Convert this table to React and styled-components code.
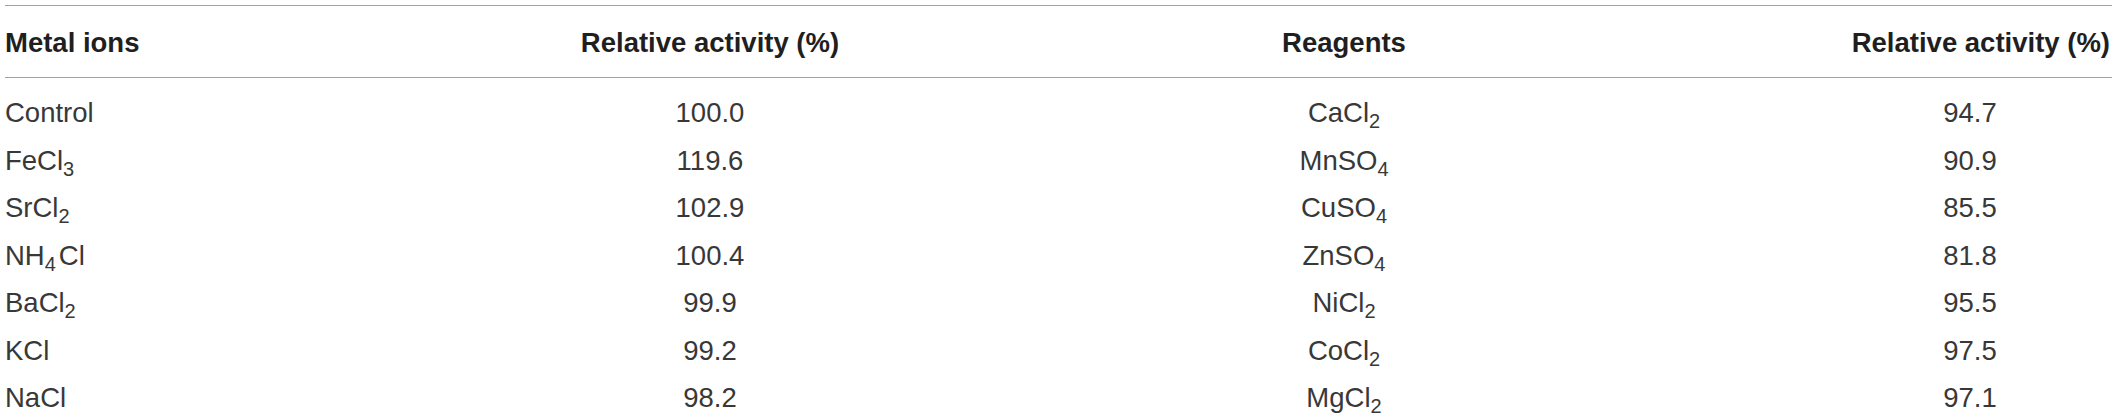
import React from "react";
import styled, { createGlobalStyle } from "styled-components";

const GlobalStyle = createGlobalStyle`
  body {
    margin: 0;
    background: #ffffff;
  }
`;

const TableWrapper = styled("div")`
  margin: 5px 5px 0;
  border-top: 1px solid #a3a3a3;
  font-family: "Liberation Sans", Arial, sans-serif;
  color: #383838;
`;

const Row = styled("div")`
  display: grid;
  grid-template-columns: 555px 300px 968px 284px;
  height: 47.5px;
  line-height: 47.5px;
  font-size: 27.5px;
  white-space: nowrap;
`;

const HeadRow = styled(Row)`
  box-sizing: content-box;
  padding: 13px 0 10px;
  border-bottom: 1px solid #a3a3a3;
  font-weight: 700;
  color: #1f1f1f;
`;

const Body = styled("div")`
  padding-top: 11.5px;
`;

const Cell = styled("div")`
  text-align: ${(p) => p.$align || "center"};
  padding-right: ${(p) => (p.$align === "right" ? "2px" : "0")};
`;

const Sub = styled("span")`
  font-size: 20px;
  line-height: 0;
  vertical-align: -6px;
  margin-right: ${(p) => (p.$gap ? "3px" : "0")};
`;

const rows = [
  ["Control", "100.0", "CaCl2", "94.7"],
  ["FeCl3", "119.6", "MnSO4", "90.9"],
  ["SrCl2", "102.9", "CuSO4", "85.5"],
  ["NH4Cl", "100.4", "ZnSO4", "81.8"],
  ["BaCl2", "99.9", "NiCl2", "95.5"],
  ["KCl", "99.2", "CoCl2", "97.5"],
  ["NaCl", "98.2", "MgCl2", "97.1"],
];

// digits in a formula are drawn as subscripts
const Formula = ({ text }) => {
  const parts = text.split(/(\d+)/).filter(Boolean);
  return (
    <>
      {parts.map((part, i) =>
        /^\d+$/.test(part) ? (
          <Sub key={i} $gap={i < parts.length - 1}>
            {part}
          </Sub>
        ) : (
          <span key={i}>{part}</span>
        )
      )}
    </>
  );
};

const App = () => {
  return (
    <>
      <GlobalStyle />
      <TableWrapper>
        <HeadRow>
          <Cell $align="left">Metal ions</Cell>
          <Cell>Relative activity (%)</Cell>
          <Cell>Reagents</Cell>
          <Cell $align="right">Relative activity (%)</Cell>
        </HeadRow>
        <Body>
          {rows.map(([ion, a, reagent, b]) => (
            <Row key={ion}>
              <Cell $align="left">
                <Formula text={ion} />
              </Cell>
              <Cell>{a}</Cell>
              <Cell>
                <Formula text={reagent} />
              </Cell>
              <Cell>{b}</Cell>
            </Row>
          ))}
        </Body>
      </TableWrapper>
    </>
  );
};

export default App;
